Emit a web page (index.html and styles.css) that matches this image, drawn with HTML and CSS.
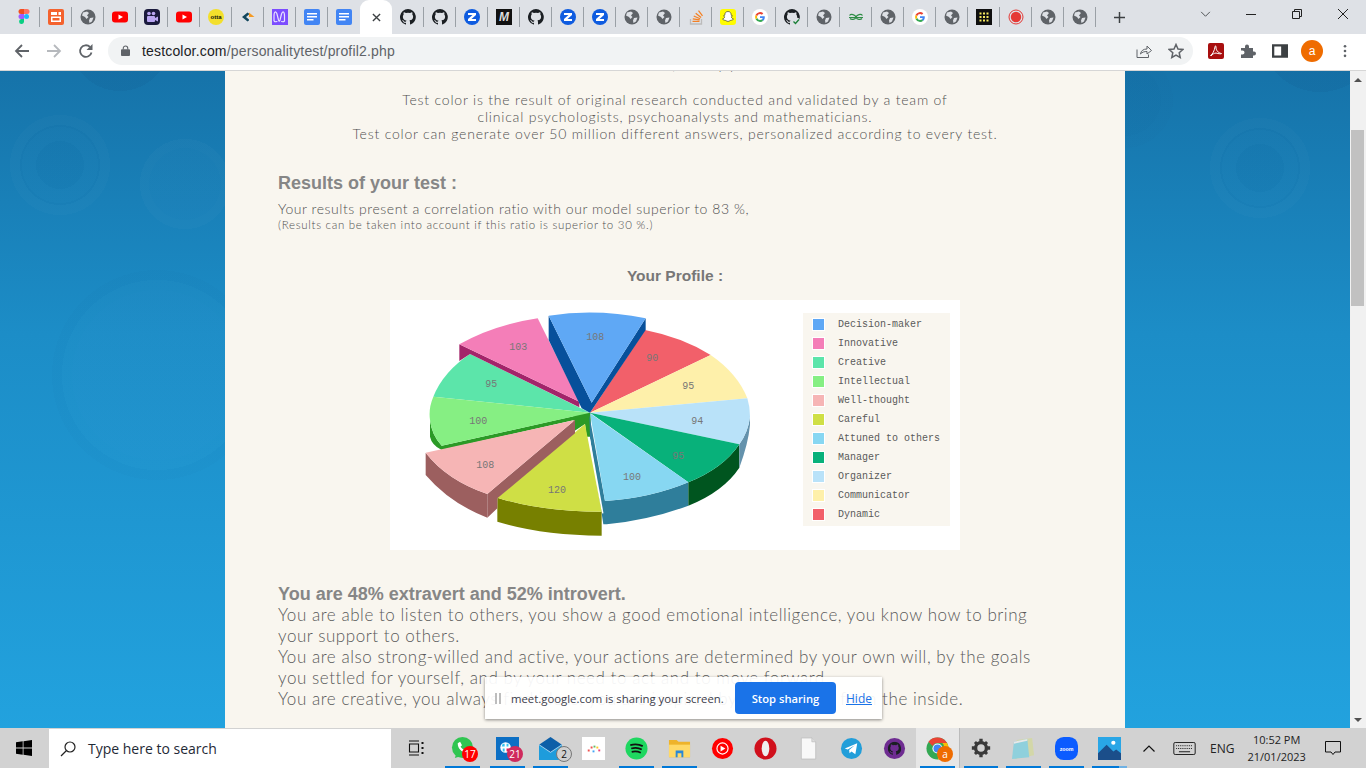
FILE: index.html
```html
<!DOCTYPE html>
<html lang="en">
<head>
<meta charset="utf-8">
<title>Test color</title>
<link rel="stylesheet" href="styles.css">
</head>
<body>
<svg class="defs" aria-hidden="true">
  <symbol id="globe" viewBox="0 0 16 16"><circle cx="8" cy="8" r="7.5" fill="#5f6368"/><path d="M3 3.500 7 2.500 9 4 7 6.500 8.500 8 6.500 10 5 8 2 6.500ZM10 9l3.500-.5L12 12.500 9.500 14 9 11.500Z" fill="#dee1e6"/></symbol>
  <symbol id="gh" viewBox="0 0 16 16"><path fill="#1b1f23" d="M8 0a8 8 0 0 0-2.500 15.600c.4.100.5-.2.500-.4v-1.400c-2.200.5-2.700-1-2.700-1-.4-.9-.9-1.200-.9-1.200-.7-.5.100-.5.100-.5.800.1 1.200.8 1.200.8.700 1.200 1.900.9 2.300.7.100-.5.300-.9.500-1.100-1.800-.2-3.600-.9-3.600-4 0-.9.300-1.600.8-2.100-.1-.2-.4-1 .1-2.100 0 0 .7-.2 2.200.8a7.600 7.600 0 0 1 4 0c1.500-1 2.200-.8 2.200-.8.400 1.100.2 1.900.1 2.100.5.600.8 1.300.8 2.100 0 3.100-1.900 3.700-3.700 3.900.3.300.6.800.6 1.500v2.200c0 .2.100.5.600.4A8 8 0 0 0 8 0Z"/></symbol>
  <symbol id="yt" viewBox="0 0 16 16"><rect y="2.500" width="16" height="11" rx="3" fill="#f00"/><path d="M6.500 5.500 11 8l-4.500 2.500Z" fill="#fff"/></symbol>
  <symbol id="doc" viewBox="0 0 16 16"><rect width="16" height="16" rx="2" fill="#4285f4"/><path d="M3 4h10v1.500H3ZM3 7h10v1.500H3ZM3 10h6.500v1.500H3Z" fill="#fff"/></symbol>
  <symbol id="zz" viewBox="0 0 16 16"><circle cx="8" cy="8" r="8" fill="#0f5ce0"/><path d="M4 4h8v2L7.500 10H12v2H4v-2l4.500-4H4Z" fill="#fff"/></symbol>
  <symbol id="gg" viewBox="0 0 16 16"><circle cx="8" cy="8" r="8" fill="#fff"/><path d="M12.800 8.200c0-.4 0-.7-.1-1H8v1.900h2.700a2.300 2.300 0 0 1-1 1.500l1.500 1.200c1-.8 1.600-2.100 1.600-3.600Z" fill="#4285f4"/><path d="M8 13c1.300 0 2.400-.4 3.200-1.200l-1.500-1.200c-.4.300-1 .5-1.700.5a3 3 0 0 1-2.800-2L3.600 10.300A5 5 0 0 0 8 13Z" fill="#34a853"/><path d="M5.200 9.100a3 3 0 0 1 0-2L3.600 5.800a5 5 0 0 0 0 4.500Z" fill="#fbbc05"/><path d="M8 5c.7 0 1.400.3 1.900.7l1.400-1.400A5 5 0 0 0 3.600 5.800l1.600 1.300A3 3 0 0 1 8 5Z" fill="#ea4335"/></symbol>
</svg>

<header class="tabstrip">
  <div class="tab"><svg class="ico" viewBox="0 0 16 16"><path d="M5 0h3v5H5a2.500 2.500 0 0 1 0-5Z" fill="#f24e1e"/><path d="M8 0h3a2.500 2.500 0 0 1 0 5H8Z" fill="#ff7262"/><path d="M5 5h3v5H5a2.500 2.500 0 0 1 0-5Z" fill="#a259ff"/><circle cx="10.500" cy="7.500" r="2.500" fill="#1abcfe"/><path d="M5 10h3v3a2.500 2.500 0 1 1-3-3Z" fill="#0acf83"/></svg></div>
  <div class="tab"><svg class="ico" viewBox="0 0 16 16"><rect width="16" height="16" rx="2" fill="#f4622e"/><path d="M3 3h6v3H3ZM3 7.500h10V13H3ZM10.500 3H13v3h-2.500Z" fill="#fff"/><path d="M4.500 9h7v2.500h-7Z" fill="#f4622e"/></svg></div>
  <div class="tab"><svg class="ico"><use href="#globe"/></svg></div>
  <div class="tab"><svg class="ico"><use href="#yt"/></svg></div>
  <div class="tab"><svg class="ico" viewBox="0 0 16 16"><rect width="16" height="16" rx="4" fill="#1a1a3d"/><rect x="3" y="7" width="8" height="6" rx="1" fill="#b9a6f2"/><path d="m11 9 3-1.500v5L11 11Z" fill="#b9a6f2"/><circle cx="5" cy="4.500" r="1.800" fill="#b9a6f2"/><circle cx="9.500" cy="4.500" r="1.800" fill="#b9a6f2"/></svg></div>
  <div class="tab"><svg class="ico"><use href="#yt"/></svg></div>
  <div class="tab"><svg class="ico" viewBox="0 0 16 16"><circle cx="8" cy="8" r="8" fill="#f3df2c"/><text x="8" y="10.300" class="otta">otta</text></svg></div>
  <div class="tab"><svg class="ico" viewBox="0 0 16 16"><path d="M7.500 3.500 2 8l5.500 4.500L9.500 11 6 8l3.500-3Z" fill="#12465c"/><path d="M9 3.500 14.500 8 9 8Z" fill="#f59a23"/><path d="M9 12.500 14.500 8 9 8Z" fill="#e5e5e5"/></svg></div>
  <div class="tab"><svg class="ico" viewBox="0 0 16 16"><rect width="16" height="16" fill="#7c4dff"/><path d="M2 12V7c0-5 2-5 3-2l1.500 6c.5 1.500 1 1.500 1.500 0l1.500-6c1-3 3-3 3 2v5c-1 1-3 1-3 0M2 12c1 1 3 1 3 0" fill="none" stroke="#e8e0ff" stroke-width="1.200"/></svg></div>
  <div class="tab"><svg class="ico"><use href="#doc"/></svg></div>
  <div class="tab last"><svg class="ico"><use href="#doc"/></svg></div>
  <div class="tab active"><svg class="ico-x" viewBox="0 0 10 10"><path d="M1 1l8 8M9 1 1 9" stroke="#3c4043" stroke-width="1.500"/></svg></div>
  <div class="tab"><svg class="ico"><use href="#gh"/></svg></div>
  <div class="tab"><svg class="ico"><use href="#gh"/></svg></div>
  <div class="tab"><svg class="ico"><use href="#zz"/></svg></div>
  <div class="tab"><svg class="ico" viewBox="0 0 16 16"><rect width="16" height="16" fill="#111"/><text x="8" y="12" class="medium">M</text></svg></div>
  <div class="tab"><svg class="ico"><use href="#gh"/></svg></div>
  <div class="tab"><svg class="ico"><use href="#zz"/></svg></div>
  <div class="tab"><svg class="ico"><use href="#zz"/></svg></div>
  <div class="tab"><svg class="ico"><use href="#globe"/></svg></div>
  <div class="tab"><svg class="ico"><use href="#globe"/></svg></div>
  <div class="tab"><svg class="ico" viewBox="0 0 16 16"><path d="M2.500 10v5h11v-5" fill="none" stroke="#bcbbbb" stroke-width="1.300"/><path d="M4.500 13h7v-1.300h-7ZM4.700 10.400l6.900 1 .2-1.200-6.900-1ZM5.500 7.500l6.400 2.800.5-1.100L6 6.400ZM7.300 4.700l5.400 4.400.8-1L8.100 3.800ZM10 2l4 5.300 1-.8L11 1.300Z" fill="#f48024"/></svg></div>
  <div class="tab"><svg class="ico" viewBox="0 0 16 16"><rect width="16" height="16" rx="3" fill="#fffc00"/><path d="M8 2.500c2.200 0 3.300 1.700 3.200 3.700 0 .5.900.3 1.200.6.300.4-.9.800-1.100 1 .1 1 1.300 2 2.200 2.300-.1.700-1.100.6-1.600.9-.4.500-.9.300-1.700.5-.8.300-1.200 1-2.200 1s-1.400-.7-2.200-1c-.8-.2-1.300 0-1.700-.5-.5-.3-1.500-.2-1.600-.9.900-.3 2.100-1.300 2.200-2.300-.2-.2-1.400-.6-1.100-1 .3-.3 1.200-.1 1.200-.6C4.700 4.200 5.800 2.500 8 2.500Z" fill="#fff" stroke="#222" stroke-width=".6"/></svg></div>
  <div class="tab"><svg class="ico"><use href="#gg"/></svg></div>
  <div class="tab"><svg class="ico" viewBox="0 0 16 16"><use href="#gh" width="16" height="16"/><circle cx="12" cy="12.500" r="4" fill="#dee1e6"/><path d="m9.500 12.500 2 2 3.500-4" fill="none" stroke="#1a7f37" stroke-width="1.300"/></svg></div>
  <div class="tab"><svg class="ico"><use href="#globe"/></svg></div>
  <div class="tab"><svg class="ico" viewBox="0 0 16 16"><path d="M8 8c-1-2.500-5-3.500-6.500-1.500M8 8c1-2.500 5-3.500 6.500-1.500M1 8.500h14M8 8.500c-1 2-4.500 2.500-6 1M8 8.500c1 2 4.500 2.500 6 1" fill="none" stroke="#2f8d46" stroke-width="1.200"/></svg></div>
  <div class="tab"><svg class="ico"><use href="#globe"/></svg></div>
  <div class="tab"><svg class="ico"><use href="#gg"/></svg></div>
  <div class="tab"><svg class="ico"><use href="#globe"/></svg></div>
  <div class="tab"><svg class="ico" viewBox="0 0 16 16"><rect width="16" height="16" fill="#0f0f0f"/><path d="M3.500 3.500h2v2h-2ZM7 3.500h2v2H7ZM10.500 3.500h2v2h-2ZM3.500 7h2v2h-2ZM7 7h2v2H7ZM10.500 7h2v2h-2ZM3.500 10.500h2v2h-2ZM7 10.500h2v2H7ZM10.500 10.500h2v2h-2Z" fill="#f5e960"/></svg></div>
  <div class="tab"><svg class="ico" viewBox="0 0 16 16"><circle cx="8" cy="8" r="7" fill="none" stroke="#e53935" stroke-width="1"/><circle cx="8" cy="8" r="5.200" fill="#e53935"/></svg></div>
  <div class="tab"><svg class="ico"><use href="#globe"/></svg></div>
  <div class="tab"><svg class="ico"><use href="#globe"/></svg></div>
  <div class="newtab"><svg class="ico-plus" viewBox="0 0 12 12"><path d="M6 0v12M0 6h12" stroke="#3c4043" stroke-width="1.600"/></svg></div>
  <div class="winbtns">
    <svg class="win-chev" viewBox="0 0 12 8"><path d="m1 1 5 5 5-5" fill="none" stroke="#3c4043" stroke-width="1"/></svg>
    <svg class="win-min" viewBox="0 0 10 1"><path d="M0 .5h10" stroke="#222" stroke-width="1"/></svg>
    <svg class="win-max" viewBox="0 0 10 10"><path d="M.5 2.500h7v7h-7ZM2.500 2.500v-2h7v7h-2" fill="none" stroke="#222" stroke-width="1"/></svg>
    <svg class="win-close" viewBox="0 0 10 10"><path d="M0 0l10 10M10 0 0 10" stroke="#222" stroke-width="1"/></svg>
  </div>
</header>

<nav class="toolbar">
  <svg class="nav-ico" viewBox="0 0 16 16"><path d="M15 8H2M8 2 2 8l6 6" fill="none" stroke="#5f6368" stroke-width="1.800"/></svg>
  <svg class="nav-ico" viewBox="0 0 16 16"><path d="M1 8h13M8 2l6 6-6 6" fill="none" stroke="#b6b9bd" stroke-width="1.800"/></svg>
  <svg class="nav-ico last-nav" viewBox="0 0 16 16"><path d="M13.500 9.500A5.800 5.800 0 1 1 12 4" fill="none" stroke="#5f6368" stroke-width="1.800"/><path d="M14.500 1v6h-6Z" fill="#5f6368"/></svg>
  <div class="omnibox">
    <svg class="lock" viewBox="0 0 10 12"><path d="M2.500 5V3.500a2.500 2.500 0 0 1 5 0V5" fill="none" stroke="#5f6368" stroke-width="1.200"/><rect y="4.500" width="10" height="7.500" rx="1" fill="#5f6368"/></svg>
    <span class="url"><span class="host">testcolor.com</span>/personalitytest/profil2.php</span>
    <svg class="share" viewBox="0 0 16 16"><path d="M1 6.500v8h11.500v-3" fill="none" stroke="#5f6368" stroke-width="1"/><path d="M4.500 11c.5-3.500 3-5 6.500-5V3l4.500 4.500L11 11V8.500c-2.500 0-5 .5-6.500 2.500Z" fill="none" stroke="#5f6368" stroke-width="1"/></svg>
    <svg class="star" viewBox="0 0 16 16"><path d="m8 1.500 2 4.500 4.800.5-3.600 3.200 1 4.800L8 12l-4.200 2.500 1-4.800L1.200 6.500 6 6Z" fill="none" stroke="#5f6368" stroke-width="1.500"/></svg>
  </div>
  <div class="ext-group">
    <svg class="ext" viewBox="0 0 16 16"><rect width="16" height="16" rx="2" fill="#a80f0f"/><path d="M2.500 12.500c2-1 4-5 4.500-8.500 0-1.500 1-1.500 1 0-.2 3 2 6 5.500 6.500 0 .7-3.500.2-5.500-.5-2 .3-3.500 1-5 3Z" fill="none" stroke="#fff" stroke-width="1"/></svg>
    <svg class="ext" viewBox="0 0 16 16"><path d="M1 5h4V3.500a2 2 0 0 1 4 0V5h4v3.500h1a2 2 0 0 1 0 4h-1V15H1v-3.500h1.500a2 2 0 0 0 0-4H1Z" fill="#5f6368"/></svg>
    <svg class="ext" viewBox="0 0 14 12"><path d="M1 1h12v10H1Z" fill="none" stroke="#3c4043" stroke-width="2"/><path d="M8 1h5v10H8Z" fill="#3c4043"/></svg>
    <span class="avatar">a</span>
    <svg class="kebab" viewBox="0 0 4 16"><circle cx="2" cy="2.500" r="1.500" fill="#5f6368"/><circle cx="2" cy="8" r="1.500" fill="#5f6368"/><circle cx="2" cy="13.500" r="1.500" fill="#5f6368"/></svg>
  </div>
</nav>

<div class="viewport">
  <main class="page">
    <aside class="side side-left"></aside>
    <article class="content">
      <p class="cut-line">The results are all, and by your team</p>
      <p class="intro">Test color is the result of original research conducted and validated by a team of<br>clinical psychologists, psychoanalysts and mathematicians.<br>Test color can generate over 50 million different answers, personalized according to every test.</p>
      <h2 class="results-title">Results of your test :</h2>
      <p class="ratio">Your results present a correlation ratio with our model superior to 83 %,</p>
      <p class="ratio-note">(Results can be taken into account if this ratio is superior to 30 %.)</p>
      <h3 class="profile-title">Your Profile :</h3>
      <div class="chart">
        <svg class="pie" viewBox="0 0 1239 750">
          <!-- depth of the pie -->
          <path d="M120 360V410Q125 435 155 450L590 352V340L155 437Q125 405 120 360Z" fill="#2b9a26"/>
          <path d="M550 342 602 338V410H590L585 372 550 395Z" fill="#2b9a26"/>
          <path d="M598 345 600 415 640 673 650 673Q780 660 895 617V547Q780 595 645 603Z" fill="#2f7e9b"/>
          <path d="M895 547Q1000 505 1048 433V503Q1000 575 895 617Z" fill="#00551f"/>
          <path d="M1048 433Q1075 395 1080 350V375Q1075 430 1048 503Z" fill="#6492ac"/>
          <!-- right slices -->
          <path d="M600 338 765 90A480 300 0 0 1 962 165Z" fill="#f2606a"/>
          <path d="M600 338 962 165A480 300 0 0 1 1072 295Z" fill="#fef0aa"/>
          <path d="M600 338 1072 295Q1080 320 1080 350 1075 395 1048 433Z" fill="#b9e2f9"/>
          <path d="M600 338 1048 433Q1000 505 895 547Z" fill="#08b17a"/>
          <path d="M600 340 895 547Q780 595 645 603Z" fill="#87d7f2"/>
          <!-- left slices -->
          <path d="M600 338 240 162Q160 215 130 290Z" fill="#5ce5aa"/>
          <path d="M600 338 130 290Q115 325 120 360 125 405 155 437Z" fill="#86ef83"/>
          <path d="M597 412 638 640" stroke="#fff" stroke-width="5"/>
          <path d="M322 593V665Q450 705 635 707V635Q450 635 322 593Z" fill="#778000"/>
          <path d="M585 372 635 635Q450 635 322 593Z" fill="#cfdf45"/>
          <path d="M107 458V525Q180 610 292 653V582Q170 540 107 458Z" fill="#9c5f5f"/>
          <path d="M292 582 555 360V400L322 595V625L292 653Z" fill="#9c5f5f"/>
          <path d="M555 360 292 582Q170 540 107 458Z" fill="#f6b5b5"/>
          <path d="M208 133V183L240 162 568 322V305Z" fill="#a3246a"/>
          <path d="M568 305 208 133Q310 75 443 55Z" fill="#f47eb8"/>
          <path d="M476 47V120L575 325 600 338 767 90V55L605 308Z" fill="#07509b"/>
          <path d="M605 308 476 47Q620 25 767 55Z" fill="#5fa8f5"/>
          <g class="pie-labels">
            <text x="616" y="120">108</text>
            <text x="787" y="183">90</text>
            <text x="895" y="267">95</text>
            <text x="922" y="372">94</text>
            <text x="865" y="477">95</text>
            <text x="726" y="541">100</text>
            <text x="501" y="580">120</text>
            <text x="286" y="505">108</text>
            <text x="265" y="372">100</text>
            <text x="304" y="262">95</text>
            <text x="385" y="151">103</text>
          </g>
        </svg>
        <ul class="legend">
          <li><i class="sw s1"></i>Decision-maker</li>
          <li><i class="sw s2"></i>Innovative</li>
          <li><i class="sw s3"></i>Creative</li>
          <li><i class="sw s4"></i>Intellectual</li>
          <li><i class="sw s5"></i>Well-thought</li>
          <li><i class="sw s6"></i>Careful</li>
          <li><i class="sw s7"></i>Attuned to others</li>
          <li><i class="sw s8"></i>Manager</li>
          <li><i class="sw s9"></i>Organizer</li>
          <li><i class="sw s10"></i>Communicator</li>
          <li><i class="sw s11"></i>Dynamic</li>
        </ul>
      </div>
      <h2 class="summary-title">You are 48% extravert and 52% introvert.</h2>
      <p class="summary">You are able to listen to others, you show a good emotional intelligence, you know how to bring<br>your support to others.<br>You are also strong-willed and active, your actions are determined by your own will, by the goals<br>you settled for yourself, and by your need to act and to move forward.<br>You are creative, you always find ideas, you are inspired by what comes from the inside.</p>
    </article>
    <aside class="side side-right"></aside>
  </main>
  <div class="scrollbar">
    <span class="arrow-up"></span>
    <span class="thumb"></span>
    <span class="arrow-down"></span>
  </div>
  <div class="share-bar">
    <span class="grip"></span>
    <span class="share-text">meet.google.com is sharing your screen.</span>
    <button class="stop">Stop sharing</button>
    <a class="hide" href="#">Hide</a>
  </div>
</div>

<footer class="taskbar">
  <svg class="winlogo" viewBox="0 0 16 16"><path d="M0 2.200 6.700 1.300V7.500H0ZM7.500 1.200 16 0V7.500H7.500ZM0 8.500H6.700V14.700L0 13.800ZM7.500 8.500H16V16L7.500 14.800Z" fill="#000"/></svg>
  <div class="search">
    <svg class="search-ico" viewBox="0 0 16 16"><circle cx="10" cy="6" r="5" fill="none" stroke="#222" stroke-width="1.200"/><path d="M6.500 9.500 1 15" stroke="#222" stroke-width="1.200"/></svg>
    <span>Type here to search</span>
  </div>
  <div class="task-ico taskview"><svg class="tv" viewBox="0 0 16 16"><path d="M1 1h10M1 15h10M1.500 4h9v8h-9Z" fill="none" stroke="#111" stroke-width="1.100"/><path d="M13.500 2h2v2h-2ZM13.500 7h2v2h-2ZM13.500 12h2v2h-2Z" fill="#111"/></svg></div>
  <div class="task-ico on"><svg class="app" viewBox="0 0 24 24"><circle cx="12" cy="11" r="11" fill="#2fc551"/><path d="M4 22l2-6 4 4Z" fill="#2fc551"/><path d="M7 6.500 9.500 5l2 3.500-1.500 1.500c.7 1.500 1.800 2.600 3.200 3.200l1.500-1.500 3 2-1.500 2.500C11 16 7 12 7 6.500Z" fill="#fff"/></svg><b class="badge red">17</b></div>
  <div class="task-ico on wide"><svg class="app" viewBox="0 0 24 24"><rect width="24" height="24" fill="#0c6fc4"/><circle cx="10" cy="11" r="5.500" fill="#fff"/><path d="M7 7h2v3H6ZM11 7h2v3h-2ZM7 12h2v3H7Z" fill="#36c5f0"/><path d="M11 12h3v3h-3Z" fill="#e01e5a"/></svg><b class="badge maroon">21</b></div>
  <div class="task-ico on"><svg class="app" viewBox="0 0 24 24"><path d="M0 8h24v16H0Z" fill="#1e9cdc"/><path d="M0 8 12 0l12 8-12 8Z" fill="#0d5fa8"/><path d="M0 8l12 8 12-8" fill="none" stroke="#cfeafa" stroke-width=".8"/></svg><b class="badge grey">2</b></div>
  <div class="task-ico"><svg class="app" viewBox="0 0 24 24"><rect width="24" height="24" fill="#fff"/><path d="M6 13h2v2H6ZM9 10h2v2H9Z" fill="#ef5350"/><path d="M12 9h2v2h-2Z" fill="#66bb6a"/><path d="M15 10h2v2h-2Z" fill="#ffca28"/><path d="M17 13h2v2h-2Z" fill="#ec407a"/><path d="M11 14h2v2h-2Z" fill="#42a5f5"/></svg></div>
  <div class="task-ico on"><svg class="app" viewBox="0 0 24 24"><circle cx="12" cy="12" r="11.500" fill="#1ed760"/><path d="M5.500 8.500c4-1 9-1 13 1M6.500 12c3.500-1 8-.7 11 1M7 15.500c3-.7 6.500-.5 9.500 1" fill="none" stroke="#111" stroke-width="1.800"/></svg></div>
  <div class="task-ico on"><svg class="app" viewBox="0 0 24 24"><path d="M1 3h8l2 2h12v16H1Z" fill="#eeb32b"/><path d="M1 8h22v13H1Z" fill="#ffd967"/><path d="M8 14h8v7h-2v-4h-4v4H8Z" fill="#2a88d8"/></svg></div>
  <div class="task-ico"><svg class="app" viewBox="0 0 24 24"><circle cx="12" cy="12" r="11" fill="#f00"/><circle cx="12" cy="12" r="5.800" fill="none" stroke="#fff" stroke-width="1.200"/><path d="m10 9 5 3-5 3Z" fill="#fff"/></svg></div>
  <div class="task-ico"><svg class="app" viewBox="0 0 24 24"><circle cx="12" cy="12" r="11.500" fill="#d0101c"/><ellipse cx="12" cy="12" rx="4" ry="8" fill="#efefef"/></svg></div>
  <div class="task-ico"><svg class="app" viewBox="0 0 24 24"><path d="M4.500 1h11l4 4v18h-15Z" fill="#f8f8f8" stroke="#bdbdbd" stroke-width=".8"/><path d="M15.500 1v4h4" fill="#ddd" stroke="#bdbdbd" stroke-width=".8"/></svg></div>
  <div class="task-ico"><svg class="app" viewBox="0 0 24 24"><circle cx="12" cy="12" r="11" fill="#229ed9"/><path d="M5 12 18 6.500 16 18l-4-3-2 2-.5-3.500 6-5-7.500 4.500Z" fill="#fff"/></svg></div>
  <div class="task-ico"><svg class="app" viewBox="0 0 24 24"><circle cx="12" cy="12" r="11" fill="#6e2c91"/><use href="#gh" x="5" y="5" width="14" height="14"/></svg></div>
  <div class="task-ico chrome on"><svg class="app" viewBox="0 0 24 24"><circle cx="12" cy="12" r="11.500" fill="#34a853"/><path d="M12 .5a11.500 11.500 0 0 1 10 5.800H12a5.800 5.800 0 0 0-5.200 3.200L2.500 5A11.500 11.500 0 0 1 12 .5Z" fill="#ea4335"/><path d="M22 6.300A11.500 11.500 0 0 1 12 23.500l5-8.700a5.800 5.800 0 0 0 0-8.500Z" fill="#fbbc05"/><circle cx="12" cy="12" r="5.300" fill="#fff"/><circle cx="12" cy="12" r="4.200" fill="#4285f4"/></svg><b class="badge orange">a</b></div>
  <div class="task-ico on gear"><svg class="app" viewBox="0 0 24 24"><circle cx="12" cy="12" r="6.500" fill="none" stroke="#3a3a3a" stroke-width="4"/><path d="M10 1h4v4h-4ZM10 19h4v4h-4ZM1 10h4v4H1ZM19 10h4v4h-4ZM3.500 6 6 3.500 9 6.500 6.500 9ZM18 3.500 20.500 6 17.500 9 15 6.500ZM3.500 18 6.500 15 9 17.500 6 20.500ZM15 17.500 17.500 15 20.500 18 18 20.500Z" fill="#3a3a3a"/></svg></div>
  <div class="task-ico on"><svg class="app" viewBox="0 0 24 24"><path d="M5 3 21 1 23 19 3 23Z" fill="#d3d7a8"/><path d="M2 5 16 2 18 21 0 23Z" fill="#8fd0dc"/><path d="M2 5 16 2v2L2 7Z" fill="#e8e8e8"/></svg></div>
  <div class="task-ico on"><svg class="app" viewBox="0 0 24 24"><rect width="24" height="24" rx="9" fill="#0b5cff"/><text x="12" y="14.500" class="zoomtxt">zoom</text></svg></div>
  <div class="task-ico on part"><svg class="app" viewBox="0 0 24 24"><rect width="24" height="24" fill="#29a6e6"/><circle cx="16" cy="6" r="2.200" fill="#fff"/><path d="M0 17 9 8l7 7 3-2 5 4v7H0Z" fill="#1b4e8a"/></svg></div>
  <div class="tray">
    <svg class="caret" viewBox="0 0 12 7"><path d="m.5 6.500 5.500-5.500 5.500 5.500" fill="none" stroke="#111" stroke-width="1.200"/></svg>
    <svg class="kbd" viewBox="0 0 24 14"><rect x=".5" y=".5" width="23" height="13" rx="1.500" fill="none" stroke="#111"/><path d="M3 4h18M3 7h18" stroke="#111" stroke-dasharray="1 1"/><path d="M6 10.500h12" stroke="#111"/></svg>
    <span class="lang">ENG</span>
    <span class="clock">10:52 PM<br>21/01/2023</span>
    <svg class="notif" viewBox="0 0 16 15"><path d="M.5.500h15v10.500H10L8 13.500 6 11H.5Z" fill="none" stroke="#111"/></svg>
  </div>
</footer>
</body>
</html>
```

FILE: styles.css
```css
* { box-sizing: border-box; }
html, body { margin: 0; height: 100%; overflow: hidden; }
body { width: 1366px; height: 768px; display: flex; flex-direction: column; font-family: "Liberation Sans", Arial, sans-serif; background: #fff; }
.defs { display: none; }

/* tab strip */
.tabstrip { height: 34px; background: #dee1e6; display: flex; padding-left: 8px; flex: none; align-items: center; }
.tab { width: 32px; height: 34px; display: flex; align-items: center; justify-content: center; position: relative; flex: none; }
.tab::after { content: ""; position: absolute; right: 0; top: 7px; width: 1px; height: 20px; background: #9aa0a6; }
.tab.last::after, .tab.active::after { display: none; }
.tab.active { background: #fff; border-radius: 9px 9px 0 0; }
.ico { width: 16px; height: 16px; }
.ico-x { width: 9px; height: 9px; }
.otta { font: 700 6px "Liberation Sans", sans-serif; text-anchor: middle; fill: #111; }
.medium { font: italic 700 12px "Liberation Sans", sans-serif; text-anchor: middle; fill: #ddd; }
.newtab { width: 46px; height: 34px; display: flex; align-items: center; justify-content: center; flex: none; }
.ico-plus { width: 11px; height: 11px; }
.winbtns { display: flex; flex: 1; align-items: center; height: 34px; position: relative; top: -3px; padding-left: 58px; }
.win-chev { width: 11px; height: 7px; margin-right: 35px; }
.win-min { width: 10px; height: 1px; margin-right: 36px; }
.win-max { width: 10px; height: 10px; margin-right: 36px; }
.win-close { width: 10px; height: 10px; }

/* toolbar */
.toolbar { height: 37px; background: #fff; display: flex; align-items: center; flex: none; padding: 0 0 3px 14px; border-bottom: 1px solid #d6d6d6; }
.nav-ico { width: 16px; height: 16px; margin-right: 16px; flex: none; }
.last-nav { margin-right: 0; }
.omnibox { width: 1085px; height: 28px; margin-left: 14px; background: #f1f3f4; border-radius: 14px; display: flex; align-items: center; padding: 0 9px 0 13px; flex: none; }
.lock { width: 9px; height: 11px; flex: none; }
.url { margin-left: 12px; font-size: 14px; letter-spacing: .17px; color: #5f6368; flex: 1; white-space: nowrap; }
.host { color: #202124; }
.share { width: 16px; height: 16px; margin-right: 16px; }
.star { width: 16px; height: 16px; }
.ext-group { display: flex; align-items: center; margin-left: 15px; }
.ext { width: 16px; height: 16px; margin-right: 16px; flex: none; }
.avatar { width: 22px; height: 22px; border-radius: 50%; background: #ef6c00; color: #fff; font-size: 12px; display: flex; align-items: center; justify-content: center; margin-right: 20px; margin-left: -3px; }
.kebab { width: 4px; height: 14px; }

/* page */
.viewport { flex: 1; display: flex; position: relative; overflow: hidden; min-height: 0; }
.page { flex: 1; display: flex; overflow: hidden; }
.side { width: 225px; flex: none; background-color: #1c8ec8; }
.side-left {
  background-image:
    radial-gradient(circle at 60px 94px, rgba(0,50,100,.025) 0 24px, rgba(255,255,255,.008) 24px 38px, rgba(0,50,100,.018) 38px 40px, rgba(255,255,255,.014) 40px 50px, transparent 50px),
    radial-gradient(circle at 185px 113px, rgba(255,255,255,.012) 0 36px, rgba(255,255,255,.02) 36px 45px, transparent 45px),
    radial-gradient(circle at 157px 304px, rgba(255,255,255,.012) 0 85px, rgba(255,255,255,.006) 85px 95px, rgba(0,50,100,.018) 95px 105px, transparent 105px),
    radial-gradient(circle at 120px -30px, rgba(0,40,90,.06) 0 50px, transparent 50px),
    linear-gradient(#1673a9, #1c8dc7 40%, #22a2de);
}
.side-right {
  background-image:
    radial-gradient(circle at 135px 97px, rgba(0,50,100,.025) 0 24px, rgba(255,255,255,.008) 24px 38px, rgba(0,50,100,.018) 38px 40px, rgba(255,255,255,.014) 40px 50px, transparent 50px),
    radial-gradient(circle at 0 29px, rgba(0,40,90,.03) 0 36px, rgba(0,40,90,.016) 36px 48px, transparent 48px),
    radial-gradient(circle at 195px -39px, rgba(0,40,90,.06) 0 60px, transparent 60px),
    linear-gradient(#1673a9, #1c8dc7 40%, #22a2de);
}
.content { width: 900px; flex: none; background: #f9f6ef; overflow: hidden; padding: 0 53px; font-family: "Lato", sans-serif; font-weight: 300; color: #505050; }
.cut-line { margin: -13px 0 0; height: 14px; line-height: 14px; text-align: center; font-size: 14px; letter-spacing: .7px; white-space: nowrap; }
.intro { margin: 19px 0 0; text-align: center; font-size: 14px; line-height: 17px; letter-spacing: .8px; }
.results-title { margin: 30px 0 0; font: 700 18px/22px "Liberation Sans", sans-serif; color: #868686; }
.ratio { margin: 6px 0 0; font-size: 14px; line-height: 17px; letter-spacing: .55px; }
.ratio-note { margin: 0; font-size: 11.500px; line-height: 15px; letter-spacing: .7px; }
.profile-title { margin: 34px 0 0; text-align: center; font: 700 15.500px/20px "Liberation Sans", sans-serif; color: #777; }
.chart { width: 570px; height: 250px; margin: 14px 0 0 112px; background: #fff; display: flex; align-items: flex-start; }
.pie { width: 413px; height: 250px; flex: none; }
.pie-labels text { font: 30px "Liberation Mono", monospace; fill: #777; text-anchor: middle; }
.legend { list-style: none; margin: 13px 0 0; padding: 2px 0 0 10px; width: 147px; height: 213px; background: #f9f6ef; font: 10px/19px "Liberation Mono", monospace; color: #5a5a5a; flex: none; }
.legend li { display: flex; align-items: center; height: 19px; white-space: nowrap; }
.sw { width: 13px; height: 13px; border: 1px solid #fff; margin-right: 13px; margin-left: -1px; flex: none; }
.s1 { background: #5fa8f5; } .s2 { background: #f47eb8; } .s3 { background: #5ce5aa; } .s4 { background: #86ef83; }
.s5 { background: #f6b5b5; } .s6 { background: #cfdf45; } .s7 { background: #87d7f2; } .s8 { background: #08b17a; }
.s9 { background: #b9e2f9; } .s10 { background: #fef0aa; } .s11 { background: #f2606a; }
.summary-title { margin: 33px 0 0; font: 700 18px/22px "Liberation Sans", sans-serif; color: #868686; }
.summary { margin: -1px 0 0; font-size: 17px; line-height: 21px; letter-spacing: .55px; white-space: nowrap; color: #5a5a5a; }

/* scrollbar */
.scrollbar { width: 16px; background: #f1f1f1; flex: none; position: relative; }
.thumb { position: absolute; left: 1px; width: 13px; top: 59px; height: 176px; background: #c1c1c1; }
.arrow-up { position: absolute; left: 4px; top: 7px; border: 4px solid transparent; border-top: 0; border-bottom: 4px solid #505050; }
.arrow-down { position: absolute; left: 4px; bottom: 6px; border: 4px solid transparent; border-bottom: 0; border-top: 4px solid #505050; }

/* share bar */
.share-bar { position: absolute; left: 485px; top: 606px; width: 397px; height: 42px; background: rgba(255,255,255,.93); box-shadow: 0 1px 3px rgba(0,0,0,.45); display: flex; align-items: center; font-family: "Open Sans", sans-serif; font-size: 11.350px; color: #3c4043; padding-left: 10px; }
.grip { width: 6px; height: 11px; border-left: 2px solid #bdbdbd; border-right: 2px solid #bdbdbd; flex: none; }
.share-text { margin-left: 10px; color: #3c3c4a; white-space: nowrap; width: 214px; flex: none; }
.stop { margin-left: 10px; width: 101px; height: 32px; flex: none; border: 0; border-radius: 4px; background: #1a73e8; color: #fff; font: 600 11.200px "Open Sans", sans-serif; }
.hide { margin-left: 10px; color: #1a73e8; font-size: 12px; }

/* taskbar */
.taskbar { height: 40px; background: #d2d2d2; display: flex; align-items: center; flex: none; position: relative; }
.winlogo { width: 16px; height: 16px; margin-left: 16px; flex: none; }
.search { width: 342px; height: 39px; margin-left: 17px; background: #fff; display: flex; align-items: center; padding-left: 11px; font: 14px "Open Sans", sans-serif; color: #1f2a36; flex: none; align-self: flex-end; }
.search-ico { width: 16px; height: 16px; margin-right: 12px; }
.task-ico { width: 43px; height: 40px; display: flex; align-items: center; justify-content: center; position: relative; flex: none; }
.taskview { width: 50px; }
.tv { width: 16px; height: 16px; }
.app { width: 23px; height: 23px; }
.wide { margin-left: 2px; }
.on::after { content: ""; position: absolute; left: 4px; right: 4px; bottom: 0; height: 2px; background: #0078d7; }
.part::after { background: linear-gradient(90deg, #0078d7 78%, #6fb1e4 78%); }
.chrome { background: #e6e6e6; }
.gear { border-left: 1px solid #bbb; }
.gear .app { width: 20px; height: 20px; }
.badge { position: absolute; right: 6px; bottom: 6px; width: 16px; height: 16px; border-radius: 50%; font: 400 10px/16px "Open Sans", sans-serif; color: #fff; text-align: center; }
.red { background: #f00; }
.maroon { background: #cf2a5d; }
.grey { right: 0; background: #d0d0d0; color: #111; border: 1px solid #777; line-height: 14px; }
.orange { background: #ef6c00; }
.zoomtxt { font: 700 5.500px "Liberation Sans", sans-serif; text-anchor: middle; fill: #fff; }
.tray { display: flex; align-items: center; flex: 1; padding-left: 12px; color: #222; }
.caret { width: 12px; height: 7px; margin-right: 18px; }
.kbd { width: 23px; height: 13px; margin-right: 14px; }
.lang { font: 12px "Open Sans", sans-serif; margin-right: 13px; }
.clock { font: 11px/17px "Open Sans", sans-serif; text-align: center; margin-right: 19px; white-space: nowrap; }
.notif { width: 16px; height: 15px; }
```
